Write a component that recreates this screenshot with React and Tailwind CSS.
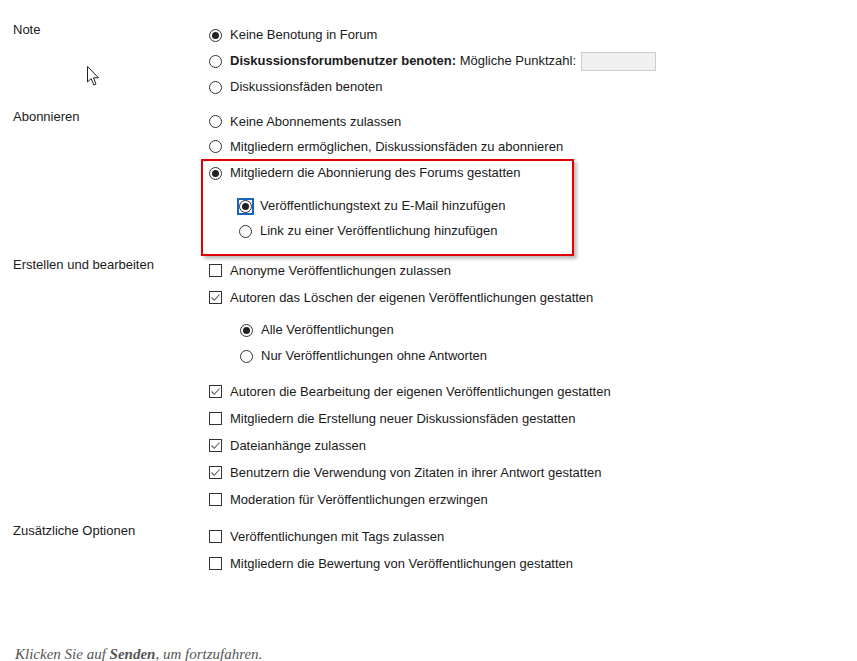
import React from "react";

function Radio({ checked, focused }) {
  const circle = (
    <span className="flex h-[13px] w-[13px] items-center justify-center rounded-full border border-[#333] bg-white">
      {checked && <span className="h-[7px] w-[7px] rounded-full bg-[#222]" />}
    </span>
  );
  if (focused) {
    return (
      <span className="-m-[2px] flex h-[17px] w-[17px] items-center justify-center border-2 border-[#1565c0]">
        {circle}
      </span>
    );
  }
  return circle;
}

function Check({ checked }) {
  return (
    <span className="flex h-[13px] w-[13px] items-center justify-center border border-[#333] bg-white">
      {checked && (
        <svg width="11" height="11" viewBox="0 0 11 11">
          <path d="M1.5 5.5 L4.3 8.3 L9.5 2.5" fill="none" stroke="#555" strokeWidth="1.1" />
        </svg>
      )}
    </span>
  );
}

function Row({ h = "h-[26px]", children, control, className = "" }) {
  return (
    <div className={`flex items-center gap-[8px] ${h} ${className}`}>
      <span className="flex w-[13px] justify-center">{control}</span>
      <span className="whitespace-nowrap">{children}</span>
    </div>
  );
}

function Section({ label, children, className = "" }) {
  return (
    <div className={`flex ${className}`}>
      <div className="w-[196px] shrink-0 pt-[1px] leading-[14px]">{label}</div>
      <div className="flex flex-col">{children}</div>
    </div>
  );
}

export default function App() {
  return (
    <div
      className="relative h-[661px] w-[857px] overflow-hidden bg-white text-[13px] text-[#1a1a1a]"
      style={{ fontFamily: '"Liberation Sans", Arial, sans-serif' }}
    >
      <div className="pl-[13px] pt-[22px]">
        <Section label="Note">
          <Row control={<Radio checked />}>Keine Benotung in Forum</Row>
          <Row control={<Radio />}>
            <b>Diskussionsforumbenutzer benoten:</b> Mögliche Punktzahl:{" "}
            <span className="ml-[1px] inline-block h-[19px] w-[75px] border border-[#ccc] bg-[#f0f0f0] align-middle" />
          </Row>
          <Row control={<Radio />}>Diskussionsfäden benoten</Row>
        </Section>

        <Section label="Abonnieren" className="mt-[9px]">
          <Row h="h-[25px]" control={<Radio />}>Keine Abonnements zulassen</Row>
          <Row h="h-[25px]" control={<Radio />}>Mitgliedern ermöglichen, Diskussionsfäden zu abonnieren</Row>
          <div className="-ml-[8px] w-[373px] border-2 border-[#e30000] pb-[11px] pl-[6px] shadow-[3px_3px_3px_rgba(0,0,0,0.25)]">
            <Row h="h-[24px]" control={<Radio checked />}>Mitgliedern die Abonnierung des Forums gestatten</Row>
            <div className="mt-[8px] pl-[30px]">
              <Row h="h-[26px]" control={<Radio checked focused />}>Veröffentlichungstext zu E-Mail hinzufügen</Row>
              <Row h="h-[24px]" control={<Radio />}>Link zu einer Veröffentlichung hinzufügen</Row>
            </div>
          </div>
        </Section>

        <Section label="Erstellen und bearbeiten" className="mt-[1px]">
          <Row h="h-[27px]" control={<Check />}>Anonyme Veröffentlichungen zulassen</Row>
          <Row h="h-[27px]" control={<Check checked />}>Autoren das Löschen der eigenen Veröffentlichungen gestatten</Row>
          <div className="mt-[6px] pl-[31px]">
            <Row control={<Radio checked />}>Alle Veröffentlichungen</Row>
            <Row control={<Radio />}>Nur Veröffentlichungen ohne Antworten</Row>
          </div>
          <div className="mt-[9px]">
            <Row h="h-[27px]" control={<Check checked />}>Autoren die Bearbeitung der eigenen Veröffentlichungen gestatten</Row>
            <Row h="h-[27px]" control={<Check />}>Mitgliedern die Erstellung neuer Diskussionsfäden gestatten</Row>
            <Row h="h-[27px]" control={<Check checked />}>Dateianhänge zulassen</Row>
            <Row h="h-[27px]" control={<Check checked />}>Benutzern die Verwendung von Zitaten in ihrer Antwort gestatten</Row>
            <Row h="h-[27px]" control={<Check />}>Moderation für Veröffentlichungen erzwingen</Row>
          </div>
        </Section>

        <Section label="Zusätzliche Optionen" className="mt-[10px]">
          <Row h="h-[27px]" control={<Check />}>Veröffentlichungen mit Tags zulassen</Row>
          <Row h="h-[27px]" control={<Check />}>Mitgliedern die Bewertung von Veröffentlichungen gestatten</Row>
        </Section>

        <p
          className="mt-[68px] pl-[2px] text-[15px] italic leading-[18px] text-[#555]"
          style={{ fontFamily: '"Liberation Serif", Georgia, serif' }}
        >
          Klicken Sie auf <b>Senden</b>, um fortzufahren.
        </p>
      </div>

      <svg className="absolute left-[87px] top-[66px]" width="14" height="21" viewBox="0 0 14 21">
        <path
          d="M0.5 0.5 L0.5 16 L4.2 12.6 L6.8 19 L9 18 L6.5 11.8 L11.5 11.8 Z"
          fill="white"
          stroke="#222"
          strokeWidth="1"
          strokeLinejoin="round"
        />
      </svg>
    </div>
  );
}
